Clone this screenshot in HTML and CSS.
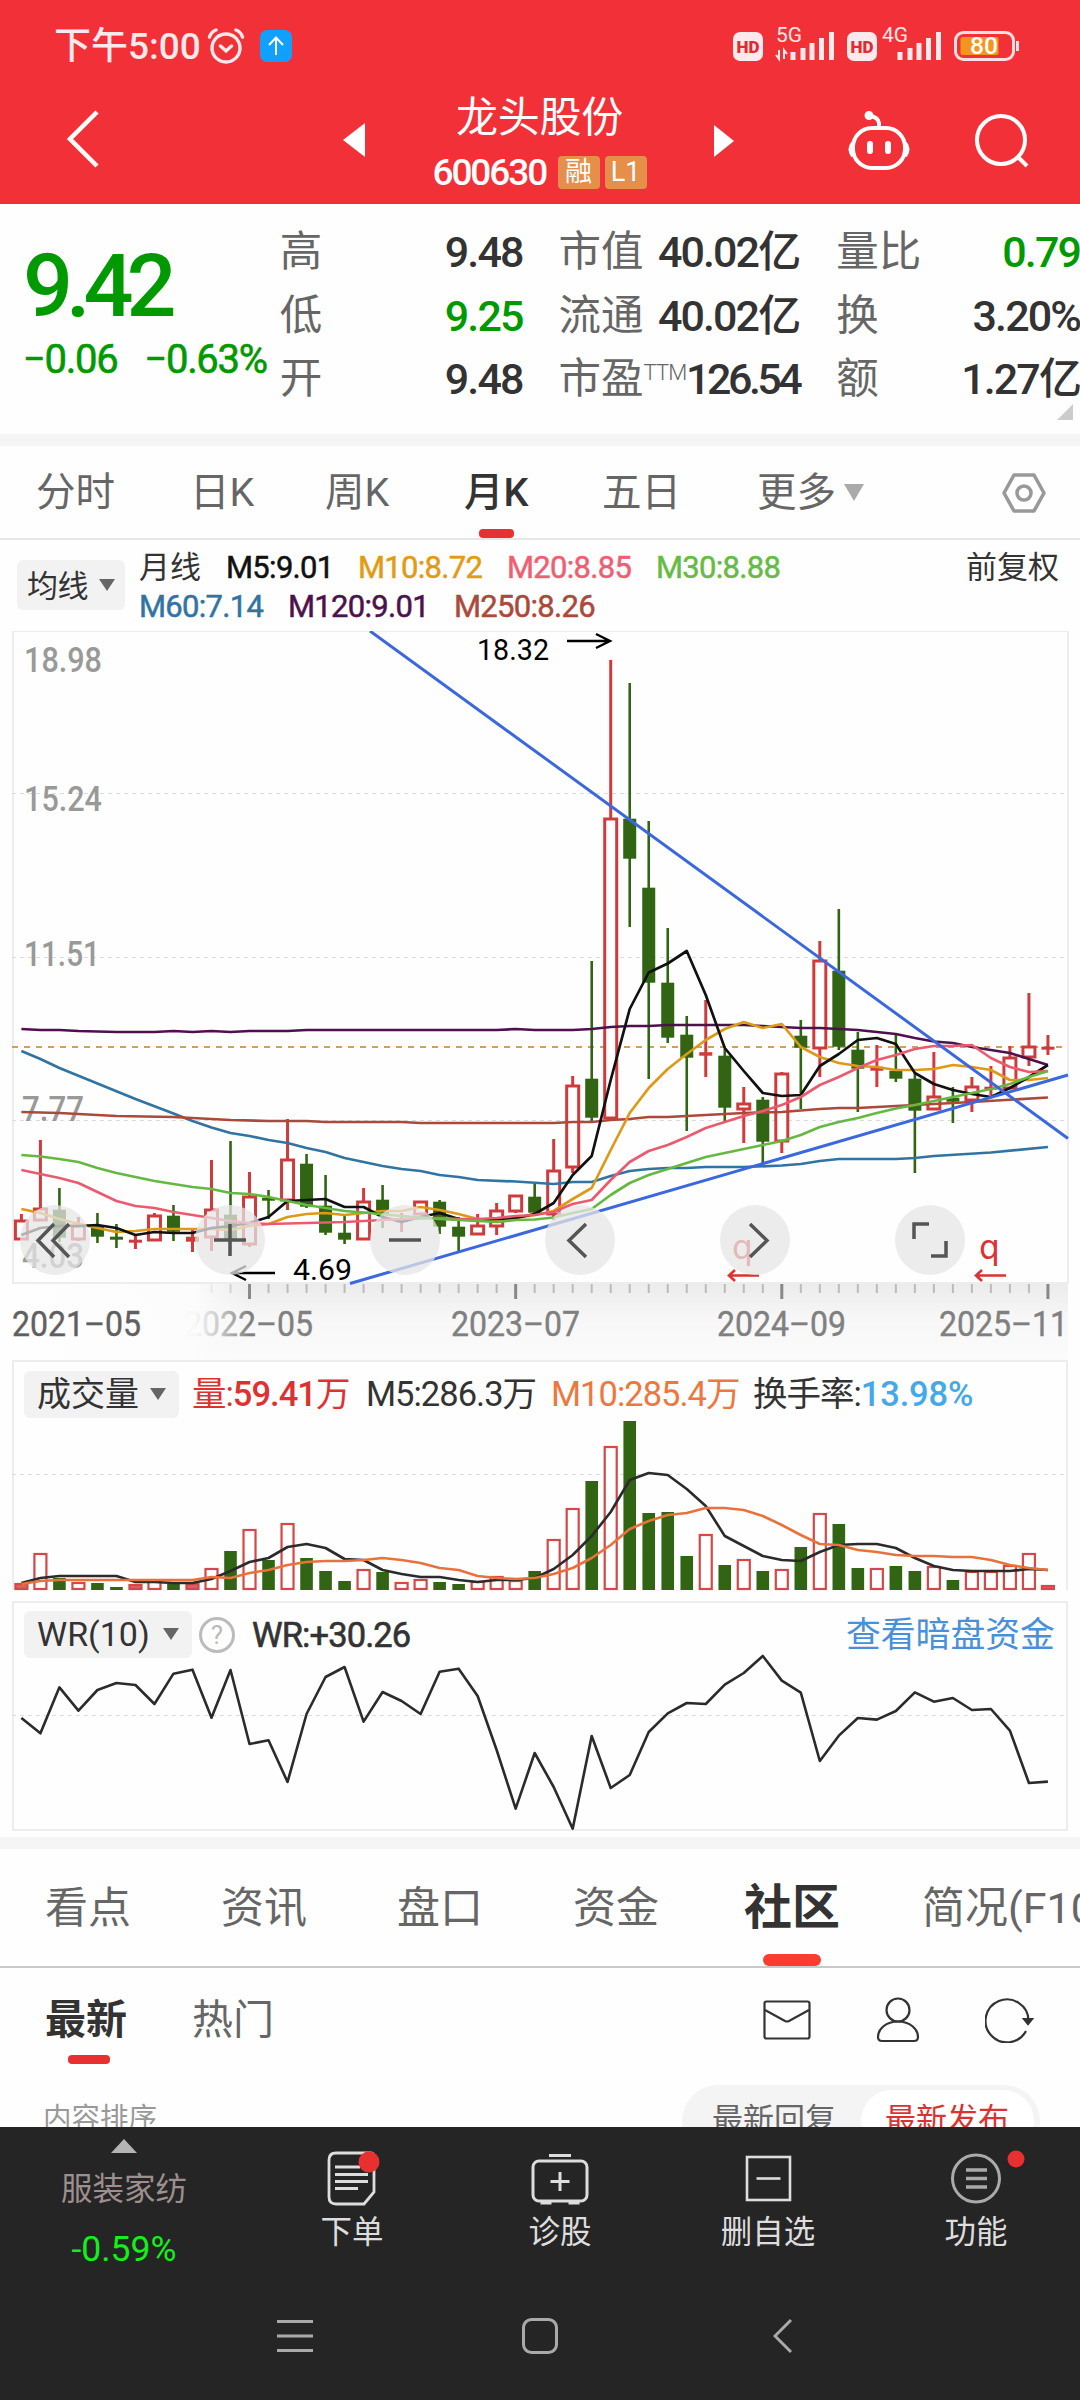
FILE: index.html
```html
<!DOCTYPE html>
<html lang="zh-CN">
<head>
<meta charset="utf-8">
<title>龙头股份 600630</title>
<link rel="stylesheet" href="styles.css">
</head>
<body>
<div class="phone">
  <header class="top">
    <div class="status">
      <span class="clock">下午5:00</span>
      <svg class="alarm" width="38" height="36" viewBox="0 0 38 36" fill="none" stroke="#ffe9ea" stroke-width="3.4" stroke-linecap="round"><circle cx="19" cy="20" r="14"/><path d="M2.500 9Q4 4 9 2M35.500 9Q34 4 29 2M13.500 18l5.500 5 5.500-5"/></svg>
      <svg class="up" width="32" height="32" viewBox="0 0 32 32"><rect width="32" height="32" rx="7" fill="#12a0ff"/><path d="M16 25V8M9 15l7-7.500 7 7.500" fill="none" stroke="#fff" stroke-width="2"/></svg>
      <span class="hd hd1">HD</span>
      <svg class="sig1" width="60" height="44" viewBox="0 -8 60 44"><text x="1" y="16" class="net" textLength="26" lengthAdjust="spacingAndGlyphs">5G</text><path d="M4 24v9l-3-4M9 33v-9l3 4" fill="none" stroke="#ffe9ea" stroke-width="2"/><path d="M18 34v-8M28 34v-12M37 34v-17M46.500 34v-22M56.500 34v-28" stroke="#ffe9ea" stroke-width="5"/></svg>
      <span class="hd hd2">HD</span>
      <svg class="sig2" width="60" height="44" viewBox="0 -8 60 44"><text x="0" y="16" class="net" textLength="26" lengthAdjust="spacingAndGlyphs">4G</text><path d="M18 34v-8M28 34v-12M37 34v-17M46.500 34v-22M56.500 34v-28" stroke="#ffe9ea" stroke-width="5"/></svg>
      <svg class="bat" width="66" height="30" viewBox="0 0 66 30"><rect x="1.500" y="1.500" width="58" height="27" rx="8" fill="none" stroke="#ffdfe0" stroke-width="3"/><rect x="6.500" y="6" width="38" height="18" rx="2" fill="#f5941f"/><path d="M63.500 10v10" stroke="#ffdfe0" stroke-width="3"/><text x="16" y="23" class="pct" textLength="28" lengthAdjust="spacingAndGlyphs">80</text></svg>
    </div>
    <nav class="nav">
      <svg class="back" width="36" height="60" viewBox="0 0 36 60" fill="none" stroke="#fff" stroke-width="4.500"><path d="M32 3L5 30l27 27"/></svg>
      <svg class="tri prev" width="23" height="34" viewBox="0 0 23 34"><path d="M22 0v34L0 17z" fill="#fff"/></svg>
      <div class="title">
        <h1>龙头股份</h1>
        <div class="code"><b>600630</b><i>融</i><i>L1</i></div>
      </div>
      <svg class="tri next" width="23" height="34" viewBox="0 0 23 34"><path d="M1 1v32L21 17z" fill="#fff"/></svg>
      <svg class="bot" width="62" height="60" viewBox="0 0 62 60" fill="none" stroke="#fff" stroke-width="4"><rect x="5" y="17" width="52" height="40" rx="19"/><path d="M5 32Q0 38 5 45M57 32Q62 38 57 45M31 16V12Q30 6 22 5"/><circle cx="21" cy="4.500" r="2.500" fill="#fff"/><path d="M22 33v7M40 33v7" stroke-width="6" stroke-linecap="round"/></svg>
      <svg class="search" width="56" height="56" viewBox="0 0 56 56" fill="none" stroke="#fff" stroke-width="4"><circle cx="27" cy="27" r="24"/><path d="M44 44l9 9"/></svg>
    </nav>
  </header>

  <section class="quote">
    <div class="last">
      <strong>9.42</strong>
      <div class="chg"><span>−0.06</span><span>−0.63%</span></div>
    </div>
    <dl class="facts f1">
      <dt>高</dt><dd>9.48</dd><dt>低</dt><dd class="g">9.25</dd><dt>开</dt><dd>9.48</dd>
    </dl>
    <dl class="facts f2">
      <dt>市值</dt><dd>40.02亿</dd><dt>流通</dt><dd>40.02亿</dd><dt>市盈<sup>TTM</sup></dt><dd class="tight">126.54</dd>
    </dl>
    <dl class="facts f3">
      <dt>量比</dt><dd class="g">0.79</dd><dt>换</dt><dd>3.20%</dd><dt>额</dt><dd>1.27亿</dd>
    </dl>
    <svg class="corner" width="16" height="16"><path d="M16 0v16H0z" fill="#ccc"/></svg>
  </section>

  <nav class="periods">
    <a>分时</a><a>日K</a><a>周K</a><a class="on">月K</a><a>五日</a><a>更多<svg width="20" height="17"><path d="M0 0h20L10 17z" fill="#aaa"/></svg></a>
    <svg class="gear" width="44" height="42" viewBox="0 0 44 42" fill="none" stroke="#999" stroke-width="3.600" stroke-linejoin="round"><path d="M12 3h20l10 18-10 18H12L2 21z"/><circle cx="22" cy="21" r="7"/></svg>
  </nav>

  <div class="legend">
    <button class="pick">均线<svg width="16" height="12"><path d="M0 0h16L8 12z" fill="#666"/></svg></button>
    <div class="mas">
      <p><span class="cn">月线</span><span class="m5">M5:9.01</span><span class="m10">M10:8.72</span><span class="m20">M20:8.85</span><span class="m30">M30:8.88</span></p>
      <p><span class="m60">M60:7.14</span><span class="m120">M120:9.01</span><span class="m250">M250:8.26</span></p>
    </div>
    <span class="adj">前复权</span>
  </div>

  <section class="price">
    <svg id="price" width="1080" height="729" viewBox="0 631 1080 729">
      <defs>
        <linearGradient id="axv" x1="0" y1="0" x2="0" y2="1"><stop offset="0" stop-color="#ebebeb"/><stop offset=".45" stop-color="#f7f7f7"/><stop offset="1" stop-color="#fbfbfb"/></linearGradient>
        <linearGradient id="axh" x1="0" y1="0" x2="1" y2="0"><stop offset="0" stop-color="#fefefe"/><stop offset=".77" stop-color="#fcfcfc" stop-opacity=".97"/><stop offset=".87" stop-color="#fafafa" stop-opacity=".6"/><stop offset="1" stop-color="#fafafa" stop-opacity="0"/></linearGradient>
      </defs>
      <rect x="12" y="1283" width="1056" height="77" fill="url(#axv)"/>
      <g id="ticks"></g>
      <text x="184" y="1336" class="date" textLength="129" lengthAdjust="spacingAndGlyphs">2022–05</text>
      <rect x="12" y="1284" width="238" height="76" fill="url(#axh)"/>
      <text x="12" y="1336" class="date first" textLength="129" lengthAdjust="spacingAndGlyphs">2021–05</text>
      <text x="451" y="1336" class="date" textLength="129" lengthAdjust="spacingAndGlyphs">2023–07</text>
      <text x="717" y="1336" class="date" textLength="129" lengthAdjust="spacingAndGlyphs">2024–09</text>
      <text x="939" y="1336" class="date" textLength="129" lengthAdjust="spacingAndGlyphs">2025–11</text>
      <rect x="13" y="631" width="1055" height="652" class="frame"/>
      <path d="M12 793.500H1068M12 957.500H1068M12 1120.500H1068" class="grid"/>
      <text x="24" y="672" class="scale" textLength="78" lengthAdjust="spacingAndGlyphs">18.98</text>
      <text x="24" y="811" class="scale" textLength="78" lengthAdjust="spacingAndGlyphs">15.24</text>
      <text x="24" y="966" class="scale" textLength="76" lengthAdjust="spacingAndGlyphs">11.51</text>
      <text x="22" y="1121" class="scale" textLength="62" lengthAdjust="spacingAndGlyphs">7.77</text>
      <text x="22" y="1268" class="scale" textLength="62" lengthAdjust="spacingAndGlyphs">4.03</text>
      <path d="M12 1047H1068" stroke="#c8a26a" stroke-width="2" stroke-dasharray="6 6"/>
      <g id="candles"></g>
      <g id="averages" fill="none" stroke-width="2.700" stroke-linejoin="round"></g>
      <path d="M370 631L1068 1138.500M350 1283.500L1068 1075" fill="none" stroke="#3b68dc" stroke-width="3"/>
      <text x="477" y="660" class="mark" textLength="72" lengthAdjust="spacingAndGlyphs">18.32</text>
      <path d="M567 641h42M596 634l14 7-14 7" fill="none" stroke="#000" stroke-width="2.400"/>
      <text x="293" y="1280" class="mark" textLength="59" lengthAdjust="spacingAndGlyphs">4.69</text>
      <path d="M275 1273h-43M246 1266l-14 7 14 7" fill="none" stroke="#000" stroke-width="2.400"/>
      <text x="732" y="1259" class="q">q</text><text x="979" y="1259" class="q">q</text>
      <path d="M759 1275.500h-30M735 1270l-6 5.500 6 5.500M1006 1275.500h-30M982 1270l-6 5.500 6 5.500" fill="none" stroke="#dc3232" stroke-width="2.600"/>
    </svg>
    <div class="tools">
      <svg viewBox="0 0 70 70"><path d="M34 19L18 35.500 34 52M49 19L33 35.500 49 52"/></svg>
      <svg viewBox="0 0 70 70"><path d="M19 35h32M35 19v32"/></svg>
      <svg viewBox="0 0 70 70"><path d="M19 35h32"/></svg>
      <svg viewBox="0 0 70 70"><path d="M41 19L24 35.500 41 52"/></svg>
      <svg viewBox="0 0 70 70"><path d="M30 19L47 35.500 30 52"/></svg>
      <svg viewBox="0 0 70 70"><path d="M34 19H19V34M36 51H51V36"/></svg>
    </div>
  </section>

  <section class="panel volume">
    <div class="head">
      <button class="pick">成交量<svg width="16" height="12"><path d="M0 0h16L8 12z" fill="#666"/></svg></button>
      <span class="v0">量:<em>59.41</em>万</span><span class="v1">M5:286.3万</span><span class="v2">M10:285.4万</span><span class="v3">换手率:<em>13.98%</em></span>
    </div>
    <svg id="volume" width="1080" height="169" viewBox="0 1421 1080 169"><path d="M12 1474.500H1068" class="grid"/></svg>
  </section>

  <section class="panel wr">
    <div class="head">
      <button class="pick">WR(10)<svg width="16" height="12"><path d="M0 0h16L8 12z" fill="#666"/></svg></button>
      <span class="help">?</span><span class="w0">WR:+30.26</span><a class="more">查看暗盘资金</a>
    </div>
    <svg id="wr" width="1080" height="171" viewBox="0 1659 1080 171"><path d="M12 1715.500H1068" class="grid"/></svg>
  </section>

  <nav class="tabs">
    <a>看点</a><a>资讯</a><a>盘口</a><a>资金</a><a class="on">社区</a><a>简况(F10)</a>
  </nav>
  <div class="subtabs">
    <a class="on">最新</a><a>热门</a>
    <svg class="mail" width="48" height="40" viewBox="0 0 48 40" fill="none" stroke="#333" stroke-width="2.200"><rect x="1.500" y="1.500" width="45" height="37" rx="2"/><path d="M2 10l20 11q2 1 4 0l20-11"/></svg>
    <svg class="user" width="44" height="46" viewBox="0 0 44 46" fill="none" stroke="#333" stroke-width="2.200"><circle cx="22" cy="13" r="11.500"/><path d="M22 24.500C10 24.500 2 32 2 40q0 4 4 4h32q4 0 4-4C42 32 34 24.500 22 24.500z"/></svg>
    <svg class="reload" width="50" height="46" viewBox="0 0 50 46" fill="none" stroke="#333" stroke-width="2.200"><path d="M43.500 23A21.500 21.500 0 1 0 41 34"/><path d="M39 22h8l-4 5z" fill="#333"/></svg>
  </div>
  <div class="sort">
    <span>内容排序</span>
    <div class="seg"><span>最新回复</span><span class="on">最新发布</span></div>
  </div>

  <footer class="bottom">
    <div class="bar">
      <div class="sector"><svg width="26" height="14"><path d="M13 0l13 14H0z" fill="#b5b5b5"/></svg><span>服装家纺</span><b>-0.59%</b></div>
      <div class="act a1"><svg width="56" height="60" viewBox="0 0 56 60" fill="none" stroke="#ddd" stroke-width="2.800"><path d="M12 5h34q4 0 4 4v35l-10 12H12q-7 0-7-7V12q0-7 7-7z"/><path d="M11 19h25M11 26.500h33M11 33.500h33M11 40.500h23"/><circle cx="45" cy="14" r="10.500" fill="#e93030" stroke="none"/></svg><span>下单</span></div>
      <div class="act"><svg width="60" height="60" viewBox="0 0 60 60" fill="none" stroke="#ddd" stroke-width="3"><rect x="3" y="13" width="54" height="40" rx="6"/><path d="M19 7.500h22M30 24v19M20.500 33.500h19"/><path d="M10.500 54.500h11M38.500 54.500h11" stroke-width="4"/></svg><span>诊股</span></div>
      <div class="act"><svg width="50" height="60" viewBox="0 0 50 60" fill="none" stroke="#ddd" stroke-width="2.600"><rect x="4" y="9" width="43" height="43"/><path d="M13.500 30.500h24"/></svg><span>删自选</span></div>
      <div class="act a4"><svg width="80" height="60" viewBox="0 0 80 60" fill="none" stroke="#aaa" stroke-width="3"><circle cx="40" cy="30.500" r="23.500"/><path d="M30 22h21M30 30.500h21M30 39h21" stroke-width="3.600"/><circle cx="80" cy="11" r="8.500" fill="#e93030" stroke="none"/></svg><span>功能</span></div>
    </div>
    <div class="sys">
      <svg width="36" height="36" viewBox="0 0 36 36" stroke="#aaa" stroke-width="3"><path d="M0 3.500h36M0 18h36M0 32.500h36"/></svg>
      <svg width="36" height="36" viewBox="0 0 36 36" fill="none" stroke="#aaa" stroke-width="3"><rect x="1.500" y="1.500" width="33" height="33" rx="8"/></svg>
      <svg class="sysback" width="20" height="36" viewBox="0 0 20 36" fill="none" stroke="#aaa" stroke-width="3"><path d="M18 2L2 18l16 16"/></svg>
    </div>
  </footer>
</div>
<script src="charts.js"></script>
</body>
</html>
```
FILE: charts.js
```js
const X0 = 21.4, STEP = 19.01;
const UP = '#cf3b3c', DOWN = '#316513';
const x = i => X0 + STEP * i;
const NS = 'http://www.w3.org/2000/svg';
function add(parent, tag, attrs) {
  const el = document.createElementNS(NS, tag);
  for (const k in attrs) el.setAttribute(k, attrs[k]);
  parent.appendChild(el);
}

// direction, high, body top, body bottom, low
const candles = `r 1214 1221 1240 1240|r 1140 1209 1221 1221|g 1188 1210 1238 1242|r 1217 1226 1240 1241|g 1213 1226 1237 1243|g 1224 1237 1240 1248|r 1235 1240 1242 1249|r 1213 1216 1241 1241|g 1205 1216 1232 1241|r 1230 1237 1242 1252|r 1160 1210 1238 1251|g 1141 1215 1240 1254|r 1172 1197 1245 1247|g 1190 1198 1201 1219|r 1119 1160 1201 1210|g 1154 1164 1207 1208|g 1175 1206 1233 1235|g 1214 1233 1240 1244|r 1188 1202 1240 1240|g 1185 1200 1215 1228|r 1213 1219 1222 1232|r 1201 1202 1215 1215|g 1200 1202 1227 1234|g 1217 1227 1237 1251|r 1214 1226 1235 1235|r 1203 1211 1227 1235|r 1195 1196 1212 1213|g 1184 1197 1213 1213|r 1139 1171 1215 1220|r 1076 1086 1168 1173|g 961 1079 1118 1122|r 660 819 1119 1119|g 683 819 859 927|g 821 888 983 1079|g 928 983 1038 1043|g 1016 1035 1058 1131|r 1000 1052.5 1056 1077|g 1049 1056 1108 1121|r 1087 1104 1110 1143|g 1097 1100 1142 1163|r 1072 1074 1142 1153|g 1020 1036 1048 1109|r 941 961 1049 1077|g 909 971 1047 1050|g 1032 1050 1069 1112|r 1045 1067 1071 1087|g 1034 1071 1079 1082|g 1073 1079 1111 1173|r 1052 1097 1110 1110|g 1087 1098 1102 1123|r 1077 1087 1101 1112|r 1066 1087 1089 1095|r 1046 1058 1089 1089|r 993 1047 1058 1066|r 1035 1047 1049 1055`
  .split('|').map(s => s.split(' '));
const cg = document.getElementById('candles');
candles.forEach(([dir, ...v], i) => {
  const [h, t, b, l] = v.map(Number), c = dir === 'r' ? UP : DOWN, cx = x(i);
  if (dir === 'g' || b - t < 6) {
    add(cg, 'path', { d: `M${cx} ${h}V${l}`, stroke: c, 'stroke-width': dir === 'g' ? 2.6 : 3 });
    add(cg, 'rect', { x: cx - 6.5, y: t - 0.3, width: 13, height: Math.max(3, b - t), fill: c });
  } else {
    add(cg, 'path', { d: `M${cx} ${h}V${t}M${cx} ${b}V${l}`, stroke: c, 'stroke-width': 3 });
    add(cg, 'rect', { x: cx - 6, y: t, width: 12, height: b - t - 1, fill: '#fff', stroke: c, 'stroke-width': 3 });
  }
});

// moving averages as index:y pairs
const averages = {
  '#4d124d': '0:1029 1:1030 2:1030 3:1031 5:1032 7:1032 8:1031 9:1032 10:1031 11:1032 12:1031 14:1031 15:1030 25:1030 26:1029 27:1030 29:1030 30:1029 31:1027 32:1026 33:1026 34:1025 38:1025 39:1026 40:1027 41:1028 42:1028 43:1029 44:1030 45:1032 46:1034 47:1038 48:1041.5 49:1043 50:1047 51:1050 52:1053 53:1059 54:1065',
  '#3274a1': '0:1051 1:1059 2:1068 4:1083.5 6:1099 8:1113.5 9:1121 10:1127.5 11:1133 12:1136 13:1140 14:1143 15:1148 16:1152 17:1158 18:1162 19:1166 20:1169 21:1171 22:1175 23:1177 24:1180 26:1181.5 28:1184 29:1182 30:1182 31:1176 32:1171 33:1169 34:1168 35:1168 36:1167 38:1167 40:1165.5 41:1164 42:1161 43:1159 46:1159 47:1158 48:1156 51:1152.5 54:1147',
  '#a94a3b': '0:1112 2:1113 5:1116 8:1117 11:1120 13:1121 15:1121 16:1122 20:1122 21:1123 28:1123 29:1122 30:1122 31:1120 32:1119 33:1117 34:1117 38:1113 40:1112 42:1109 43:1108 44:1108 47:1105 50:1102 54:1097.5',
  '#dd9a18': '0:1209 1:1213 2:1219 3:1224 4:1228 5:1232 6:1231 7:1229 10:1229 11:1230 12:1226 13:1224 14:1217 15:1214 16:1213 17:1215 18:1213 19:1211 20:1211 21:1207 22:1210 23:1214 24:1219 25:1220 26:1218 27:1215 28:1211 29:1199 30:1188 31:1150 32:1113 33:1088 34:1069 35:1054 36:1040 37:1029 38:1022 39:1028 40:1024 41:1047 42:1057 43:1063 44:1066 45:1067 46:1070 47:1070 48:1069 49:1065 50:1067 51:1070 52:1080 53:1080 54:1078',
  '#111': '0:1235 1:1228 2:1226 3:1226 4:1225 5:1228 6:1235 7:1232 8:1233 9:1233 10:1228 11:1226 12:1223 13:1217 14:1201 15:1200 16:1199 17:1207 18:1207 19:1217 20:1222 21:1217 22:1213 23:1219 24:1220 25:1219 26:1218 27:1214 28:1203 29:1175 30:1156 31:1080 32:1009 33:972.5 34:963.5 35:951 36:995 37:1048 38:1071 39:1093 40:1096 41:1095 42:1066 43:1054 44:1040 45:1038 46:1044 47:1073 48:1084 49:1090 50:1094 51:1097 52:1088 53:1077 54:1065',
  '#ea5b70': '0:1170 1:1174 2:1178 3:1183 4:1192 5:1201 6:1206 7:1208 8:1212 9:1215 10:1218 11:1221 12:1223 13:1224 14:1223.5 17:1222 19:1220 20:1219 22:1218 23:1219 24:1219 25:1218 26:1216 27:1215 28:1212 29:1204 30:1200 31:1180 32:1162 33:1151 34:1145 35:1137 36:1128 37:1122 38:1116 39:1111 40:1105 41:1097 42:1085 43:1077 44:1068 45:1060 46:1055 47:1049 48:1046 49:1046 50:1045 51:1058 52:1067 53:1072 54:1071',
  '#66b843': '0:1155 1:1156.5 2:1159 3:1162 4:1168 5:1173 6:1177 7:1181 8:1184 9:1187 10:1189 11:1193 12:1194 13:1197 14:1201 15:1205 16:1208 17:1211 18:1212.5 20:1216 22:1219 23:1220 24:1221 25:1222 26:1220 27:1219.5 28:1217.5 29:1213 30:1209 31:1195 32:1183 33:1175 34:1169 35:1163 36:1157 37:1153 38:1149 39:1145 40:1141 41:1135 42:1127 43:1122 44:1118 45:1113 46:1108.5 47:1105 48:1101 49:1097 50:1093 51:1089 52:1084 53:1077 54:1071'
};
const ag = document.getElementById('averages');
for (const color in averages) {
  const points = averages[color].split(' ').map(p => { const [i, y] = p.split(':'); return x(+i) + ',' + y; }).join(' ');
  add(ag, 'polyline', { points, stroke: color });
}

const tg = document.getElementById('ticks');
for (let i = 10; i < 55; i++) {
  const major = (i - 12) % 14 === 0;
  add(tg, 'path', { d: `M${x(i)} 1284V${major ? 1299 : 1293}`, stroke: major ? '#888' : '#bbb', 'stroke-width': major ? 3 : 2 });
}

const volumes = 'r5 r35 g11 r6 g6 g2 r4 r8 g5 r5 r20 g38 r59 g29 r65 g31 g18 g8 r19 g17 r6 r9 g7 g5 r7 r12 r8 g18 r49 r80 g108 r142 g168 g76 g77 g33 r54 g24 r29 g18 r19 g42 r75 g65 g21 r20 g23 g18 r22 g9 r17 r17 r23 r35 r3'.split(' ');
const vs = document.getElementById('volume'), BASE = 1590;
volumes.forEach((s, i) => {
  const h = +s.slice(1) + 1;
  if (s[0] === 'g') add(vs, 'rect', { x: x(i) - 6.3, y: BASE - h, width: 12.6, height: h, fill: DOWN });
  else add(vs, 'rect', { x: x(i) - 6, y: BASE - h, width: 12, height: h - 1, fill: h < 7 ? '#e06060' : '#fff', stroke: '#d44848', 'stroke-width': 2.2 });
});
const vol5 = [6,11,13,13,13,13,7,7,6,6,10,18,27,31,42,45,41,30,29,19,15,12,12,9,7,9,9,11,20,34,53,77,109,116,114,100,83,53,43,33,29,28,37,44,45,45,41,31,23,19,18,18,18,20,19];
const vol10 = [5,8,9,9,9,9,9,9,9,9,12,11,16,19,24,27,28,28,29,31,29,26,21,19,13,11,10,11,15,21,31,44,60,68,74,76,81,81,79,73,64,54,45,44,39,37,34,33,33,32,32,29,24,21,19];
const line = (svg, ys, stroke, w) => add(svg, 'polyline', { points: ys.map((y, i) => x(i) + ',' + y).join(' '), fill: 'none', stroke, 'stroke-width': w, 'stroke-linejoin': 'round' });
line(vs, vol5.map(h => 1589 - h), '#2b2b2b', 2.6);
line(vs, vol10.map(h => 1589 - h), '#e8723c', 2.6);

const wr = [384,430,292,362,300,279,285,342,251,239,383,240,462,451,576,372,261,231,395,306,333,372,245,236,318,480,656,489,591,716,438,594,555,426,370,339,342,284,249,198,272,308,513,437,384,389,363,307,335,324,360,357,422,579,575];
line(document.getElementById('wr'), wr.map(v => 1590 + v / 3), '#2b2b2b', 2.6);
```
FILE: styles.css
```css
* { box-sizing: border-box; }
body, h1, p, dl, dd, dt { margin: 0; padding: 0; }
body { background: #fff; color: #333; font-family: Roboto, "Noto Sans CJK SC", sans-serif; }
b, strong, h1, i, em { font-weight: inherit; font-style: normal; }
svg { display: block; flex: none; }
.phone { width: 1080px; height: 2400px; overflow: hidden; display: flex; flex-direction: column; background: #fefefe; }
.phone > * { flex: none; }
.phone span, .phone a, .phone b, .phone strong, dt, dd { white-space: nowrap; }

.top { height: 204px; background: #f13038; color: #fff; }
.status { height: 92px; display: flex; align-items: center; padding-left: 54px; color: #ffe9ea; }
.clock { width: 153px; font-size: 37px; font-weight: 500; letter-spacing: 0; line-height: 44px; margin-top: 1px; }
.up { margin-left: 15px; }
.hd { width: 30px; height: 29px; border-radius: 7px; background: #ffe9ea; color: #e02a34; font-size: 17px; font-weight: 900; line-height: 30px; text-align: center; }
.hd1 { margin-left: 441px; }
.sig1 { margin-left: 12px; margin-top: -13px; }
.hd2 { margin-left: 12px; }
.sig2 { margin-left: 5px; margin-top: -13px; }
.bat { margin-left: 12px; }
.net { font-size: 21px; fill: #ffe9ea; }
.pct { font-size: 23px; font-weight: 500; fill: #fff; }
.nav { height: 112px; display: flex; align-items: flex-start; padding-left: 65px; }
.back { margin-top: 17px; }
.prev { margin: 31px 0 0 242px; }
.title { width: 347px; display: flex; flex-direction: column; align-items: center; }
.title h1 { font-size: 42px; line-height: 50px; letter-spacing: -.2px; margin-top: 1px; }
.code { display: flex; align-items: center; height: 36px; margin-top: 11px; gap: 5px; }
.code b { font-size: 37px; font-weight: 500; letter-spacing: -2.100px; width: 120px; line-height: 40px; padding-top: 2px; }
.code i { width: 42px; height: 33px; border-radius: 4px; background: #e58f4b; font-size: 27px; line-height: 32px; text-align: center; }
.next { margin-top: 32px; }
.bot { margin: 19px 0 0 112px; }
.search { margin: 21px 0 0 64px; }

.quote { height: 242px; border-bottom: 12px solid #f5f5f5; display: flex; position: relative; padding-top: 15px; }
.last { width: 280px; padding: 22px 0 0 23px; color: #009900; }
.last strong { display: block; font-size: 88px; font-weight: 500; line-height: 90px; letter-spacing: -7px; }
.chg { display: flex; gap: 27px; font-size: 40px; line-height: 46px; margin-top: 6px; letter-spacing: -1.300px; -webkit-text-stroke: .6px currentColor; }
.facts { display: grid; grid-auto-rows: 63.500px; grid-template-columns: minmax(0, 1fr) auto; font-size: 42.500px; line-height: 66px; }
.facts dt { color: #666; }
.facts dd { text-align: right; font-weight: 500; font-size: 43px; letter-spacing: -1.900px; }
.facts .tight { letter-spacing: -3.500px; }
.f1 { width: 243px; }
.f2 { width: 241px; margin-left: 36px; }
.f3 { width: 244px; margin-left: 37px; }
.facts .g { color: #009900; }
sup { font-size: 22px; vertical-align: 13px; line-height: 0; font-weight: 300; letter-spacing: -.8px; }
.corner { position: absolute; left: 1057px; top: 200px; }

.periods { height: 94px; border-bottom: 2px solid #e6e6e6; display: flex; font-size: 39.500px; line-height: 95px; color: #666; padding-left: 36px; }
.periods a { width: 142px; display: flex; align-items: center; gap: 8px; position: relative; }
.periods a:nth-child(1) { width: 154px; }
.periods a:nth-child(2) { width: 135px; }
.periods a:nth-child(3) { width: 139px; }
.periods a:nth-child(4) { width: 138px; }
.periods a:nth-child(5) { width: 155px; }
.periods a:nth-child(6) { width: 245px; }
.periods .on { color: #333; font-weight: 500; }
.periods .on::after { content: ""; position: absolute; left: 15px; bottom: 0; width: 35px; height: 9px; border-radius: 4px; background: #e93030; }
.gear { margin-top: 26px; }

.pick { border: 0; background: #f2f2f2; border-radius: 6px; color: #333; font: inherit; display: flex; align-items: center; justify-content: space-between; flex: none; }
.legend { height: 91px; display: flex; padding-left: 17px; font-size: 31px; }
.legend .pick { width: 108px; height: 50px; margin-top: 20px; padding: 0 10px 4px; letter-spacing: -.5px; }
.legend .pick svg { margin-top: 3px; }
.mas { width: 840px; padding: 8px 0 0 14px; }
.mas p { display: flex; line-height: 39px; letter-spacing: -.7px; -webkit-text-stroke: .5px currentColor; }
.mas .cn { letter-spacing: 0; width: 87px; -webkit-text-stroke: 0; }
.m5 { color: #111; width: 132px; } .m10 { color: #e19b14; width: 149px; } .m20 { color: #ef5f74; width: 149px; } .m30 { color: #67bb45; }
.m60 { color: #3274a1; width: 149px; } .m120 { color: #4d124d; width: 166px; } .m250 { color: #a94a3b; }
.adj { line-height: 39px; margin-top: 8px; margin-left: 1px; }

.price { position: relative; height: 729px; }
.frame { fill: none; stroke: #ededed; stroke-width: 2; }
.grid { fill: none; stroke: #dcdcdc; stroke-width: 1.200; stroke-dasharray: 4 4; }
.scale { font-size: 35px; font-weight: 500; fill: #999; }
.date { font-size: 35px; font-weight: 400; fill: #808080; stroke: #808080; stroke-width: .4; }
.first { fill: #606060; stroke: #606060; }
.mark { font-size: 30px; fill: #000; }
.q { font: 33px "DejaVu Sans", sans-serif; fill: #dc3232; }
.tools { position: absolute; left: 20px; top: 574px; display: flex; gap: 105px; }
.tools svg { width: 70px; height: 70px; border-radius: 50%; background: rgba(230, 230, 230, .75); fill: none; stroke: #555; stroke-width: 3.500; }

.panel { border: 2px solid #ededed; width: 1056px; margin-left: 12px; }
.panel > svg { margin-left: -14px; overflow: visible; }
.volume { height: 230px; border-bottom: 0; }
.wr { height: 230px; margin-top: 11px; }
.head { display: flex; align-items: center; height: 59px; padding: 5px 0 0 10px; font-size: 34.500px; letter-spacing: -1px; line-height: 42px; }
.head .pick { width: 155px; height: 47px; padding: 0 13px 1px; letter-spacing: 0; font-size: 34px; }
.wr .head { height: 56px; padding-top: 7px; }
.wr .head .pick { width: 168px; }
.v0 { color: #dc3232; margin-left: 13px; width: 174px; } .v0 em { font-weight: 500; letter-spacing: -1px; } .v1 { width: 185px; } .v2 { color: #ee7740; width: 202px; } .v3 em { color: #44a9e6; font-weight: 500; letter-spacing: -.2px; }
.head .help { width: 36px; height: 36px; border: 3px solid #bbb; border-radius: 50%; color: #bbb; font-size: 26px; line-height: 30px; text-align: center; margin: 0 17px 0 7px; letter-spacing: 0; }
.w0 { width: 594px; letter-spacing: -.9px; -webkit-text-stroke: .6px currentColor; }
.head .more { color: #4a90d9; letter-spacing: 0; font-size: 34.800px; }

.tabs { margin-top: 6px; height: 131px; border-top: 12px solid #f5f5f5; border-bottom: 2px solid #c9c9c9; display: flex; padding-left: 45px; font-size: 43px; line-height: 118px; color: #666; }
.tabs a { width: 176px; flex: none; position: relative; }
.tabs a:nth-child(4) { width: 170px; }
.tabs a.on { font-size: 48px; font-weight: 700; color: #333; width: 179px; padding-left: 1px; }
.tabs .on::after { content: ""; position: absolute; left: 20px; bottom: 0; width: 58px; height: 12px; border-radius: 6px; background: #fa3c32; }
.subtabs { height: 104px; display: flex; align-items: center; padding-left: 45px; font-size: 41px; color: #666; }
.subtabs a { width: 147px; position: relative; line-height: 90px; }
.subtabs .on { color: #333; font-weight: 700; }
.subtabs .on::after { content: ""; position: absolute; left: 23px; bottom: 1px; width: 42px; height: 9px; border-radius: 4px; background: #e93030; }
.mail { margin-left: 424px; } .user { margin-left: 65px; } .reload { margin-left: 65px; }
.sort { height: 55px; overflow: hidden; display: flex; justify-content: space-between; padding: 13px 40px 0 43px; font-size: 28.500px; line-height: 68px; color: #999; }
.seg { width: 358px; height: 72px; border-radius: 36px; background: #f4f4f4; color: #666; font-size: 31px; display: flex; padding: 5px 6px 0 30px; }
.seg span { width: 149px; line-height: 60px; }
.seg .on { width: 173px; height: 62px; border-radius: 31px; background: #fff; color: #dc3232; padding-left: 24px; }

.bottom { height: 274px; background: #252525; color: #ddd; }
.bar { height: 145px; display: flex; }
.sector { width: 248px; padding-top: 12px; display: flex; flex-direction: column; align-items: center; font-size: 31.500px; line-height: 40px; color: #9e8f8f; }
.sector span { margin-top: 17px; }
.sector b { color: #14f01e; margin-top: 19px; font-size: 35.500px; letter-spacing: 0; }
.act { width: 208px; padding-top: 21px; display: flex; flex-direction: column; align-items: center; font-size: 31.500px; line-height: 40px; }
.act svg { overflow: visible; }
.act span { margin-top: 5px; }
.sys { height: 127px; display: flex; align-items: center; padding: 0 0 0 277px; gap: 209px; }
.sysback { margin-left: 6px; }
```
